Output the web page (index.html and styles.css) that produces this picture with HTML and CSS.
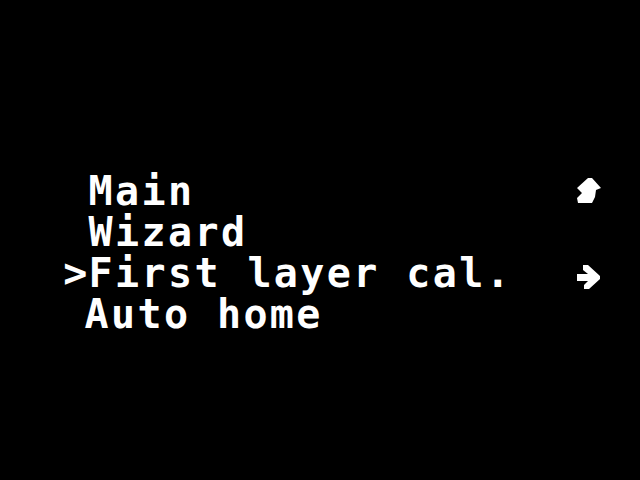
FILE: index.html
```html
<!DOCTYPE html>
<html>
<head>
<meta charset="utf-8">
<link rel="stylesheet" href="styles.css">
</head>
<body>
<div class="menu">
  <div class="row">
    <span class="cursor"></span><span class="label">Main</span>
    <span class="icon icon-up"><svg width="26" height="26" viewBox="0 0 26 26"><path d="M12 1 L16 1 L25 11 L20 13 L19 20 L16 26 L2 26 L1 21 L6 16 L3 13 L1 11 Z" fill="#fff"/></svg></span>
  </div>
  <div class="row">
    <span class="cursor"></span><span class="label">Wizard</span>
  </div>
  <div class="row">
    <span class="cursor">&gt;</span><span class="label">First layer cal.</span>
    <span class="icon icon-right"><svg width="24" height="24" viewBox="0 0 24 24"><path d="M6 0 L11 0 L23 11 L23 14 L12 24 L7 24 L7 20 L11 16 L0 16 L0 9 L11 9 L6 5 Z" fill="#fff"/></svg></span>
  </div>
  <div class="row row-last">
    <span class="cursor"></span><span class="label">Auto home</span>
  </div>
</div>
</body>
</html>
```
FILE: styles.css
```css
html, body {
  margin: 0;
  padding: 0;
  background: #000;
  width: 640px;
  height: 480px;
  overflow: hidden;
}
.menu {
  padding: 171px 0 0 62px;
  color: #fff;
  font-family: "DejaVu Sans Mono", monospace;
  font-weight: bold;
  font-size: 40px;
  letter-spacing: 2.4px;
  line-height: 41px;
}
.row {
  display: flex;
  align-items: flex-start;
  width: 541px;
  height: 41px;
  white-space: pre;
}
.cursor {
  width: 26.5px;
  flex: none;
  text-align: center;
  letter-spacing: 0;
}
.label {
  flex: 1;
}
.row-last .label {
  margin-left: -4px;
}
.icon {
  width: 28px;
  display: flex;
  justify-content: center;
  flex: none;
}
.icon-up {
  margin-top: 6px;
}
.icon-right {
  margin-top: 12px;
}
```
